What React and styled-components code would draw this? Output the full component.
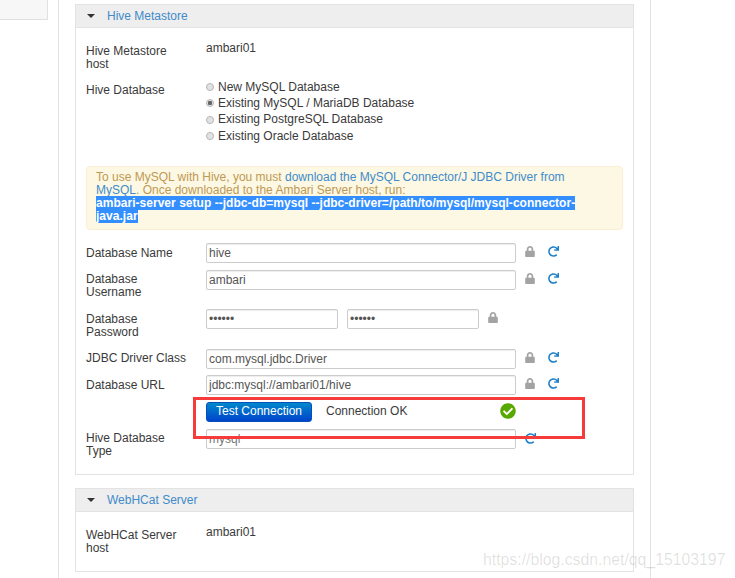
import React from 'react'
import styled, { createGlobalStyle } from 'styled-components'
import { FaCheckCircle, FaLock, FaRedo } from 'react-icons/fa'

const Global = createGlobalStyle`
    html, body {
        margin: 0;
        padding: 0;
        background: #fff;
    }
    body {
        font-family: "Liberation Sans", Arial, sans-serif;
        font-size: 12px;
        line-height: 13px;
        color: #3a3a3a;
    }
`

const Page = styled.div`
    position: relative;
    display: flex;
    align-items: flex-start;
    width: 735px;
    height: 578px;
    overflow: hidden;
`

const SideStub = styled.div`
    box-sizing: border-box;
    width: 48px;
    height: 20px;
    margin-right: 10px;
    background: #f7f7f7;
    border-right: 1px solid #e0e0e0;
    border-bottom: 1px solid #e0e0e0;
`

const Main = styled.div`
    box-sizing: border-box;
    width: 593px;
    height: 578px;
    padding: 4px 16px 0;
    border-left: 1px solid #e3e3e3;
    border-right: 1px solid #e3e3e3;
`

const Panel = styled.section`
    margin-bottom: 13px;
    border: 1px solid #e3e3e3;
    border-top: 0;
`

const PanelHead = styled.div`
    display: flex;
    align-items: center;
    height: 24px;
    box-sizing: border-box;
    margin: 0 -1px;
    padding-left: 11px;
    background: #eee;
    border: 1px solid #e3e3e3;
    color: #428bca;
`

const Caret = styled.i`
    width: 0;
    height: 0;
    margin-right: 12px;
    border-top: 4px solid #333;
    border-left: 4px solid transparent;
    border-right: 4px solid transparent;
`

const PanelBody = styled.div`
    padding: 14px 10px 16px;
`

const Row = styled.div`
    display: grid;
    grid-template-columns: 120px 1fr;
    margin-bottom: ${(p) => p.$gap || 0}px;
`

const Label = styled.label`
    display: block;
    width: 100px;
    padding-top: ${(p) => p.$top || 3}px;
`

const Value = styled.div`
    min-height: 13px;
`

const RadioList = styled.div`
    display: flex;
    flex-direction: column;
`

const RadioRow = styled.div`
    display: flex;
    align-items: center;
    height: 16.33px;
`

const RadioDot = styled.span`
    box-sizing: border-box;
    width: 8px;
    height: 8px;
    margin-right: 4px;
    border-radius: 50%;
    border: 1px solid #b5b5b5;
    background: ${(p) => (p.$on ? 'radial-gradient(circle, #666 0 2px, #e6e6e6 2.5px)' : '#e2e2e2')};
`

const Alert = styled.div`
    margin-bottom: 13px;
    padding: 4px 20px 6px 9px;
    background: #fcf8e3;
    border: 1px solid #fbeed5;
    border-radius: 4px;
    color: #c09853;
`

const AlertLink = styled.a`
    color: #428bca;
`

const Selected = styled.span`
    background: #338fff;
    color: #fff;
    font-weight: bold;
    letter-spacing: 0.03px;
`

const Controls = styled.div`
    display: flex;
    align-items: flex-start;
`

const Input = styled.input`
    box-sizing: border-box;
    flex: none;
    width: ${(p) => p.$w || 310}px;
    height: 20px;
    margin: 0 ${(p) => p.$after || 0}px 0 0;
    padding: 0 2px;
    border: 1px solid #ccc;
    border-radius: 2px;
    box-shadow: inset 0 1px 1px rgba(0, 0, 0, 0.075);
    font: 12px "Liberation Sans", Arial, sans-serif;
    color: ${(p) => (p.disabled ? '#777' : '#555')};
    background: #fff;
    outline: 0;
`

const LockIcon = styled(FaLock)`
    flex: none;
    width: 10px;
    height: 11px;
    margin: 3px 13px 0 9px;
    color: #a3a3a3;
`

const RefreshIcon = styled(FaRedo)`
    flex: none;
    width: 11px;
    height: 11px;
    margin-top: ${(p) => p.$top || 3}px;
    margin-left: ${(p) => p.$left || 0}px;
    color: #1e7fc9;
`

const TestButton = styled.button`
    box-sizing: border-box;
    width: 106px;
    height: 20px;
    padding: 0 0 2px;
    border: 1px solid #0650b8;
    border-radius: 3px;
    background: linear-gradient(#0088cc, #0044cc);
    color: #fff;
    font: 12px "Liberation Sans", Arial, sans-serif;
`

const ConnectionText = styled.span`
    width: 174px;
    margin-left: 14px;
    line-height: 18px;
`

const OkIcon = styled(FaCheckCircle)`
    width: 16px;
    height: 16px;
    margin-top: 1px;
    color: #59a800;
`

const Highlight = styled.div`
    position: absolute;
    left: 193px;
    top: 397px;
    width: 392px;
    height: 42px;
    box-sizing: border-box;
    border: 3px solid #f73b3b;
`

const Watermark = styled.div`
    position: absolute;
    left: 483px;
    top: 551px;
    font-size: 15.8px;
    line-height: 18px;
    color: rgba(0, 0, 0, 0.13);
`

const App = () => {
    return <Page>
        <Global />
        <SideStub />
        <Main>
            <Panel>
                <PanelHead><Caret />Hive Metastore</PanelHead>
                <PanelBody>
                    <Row $gap={8}>
                        <Label>Hive Metastore host</Label>
                        <Value>ambari01</Value>
                    </Row>
                    <Row $gap={22}>
                        <Label $top={5}>Hive Database</Label>
                        <RadioList>
                            <RadioRow><RadioDot />New MySQL Database</RadioRow>
                            <RadioRow><RadioDot $on />Existing MySQL / MariaDB Database</RadioRow>
                            <RadioRow><RadioDot />Existing PostgreSQL Database</RadioRow>
                            <RadioRow><RadioDot />Existing Oracle Database</RadioRow>
                        </RadioList>
                    </Row>
                    <Alert>
                        To use MySQL with Hive, you must <AlertLink>download the MySQL Connector/J JDBC Driver from MySQL</AlertLink>. Once downloaded to the Ambari Server host, run:<br />
                        <Selected>ambari-server setup --jdbc-db=mysql --jdbc-driver=/path/to/mysql/mysql-connector-java.jar</Selected>
                    </Alert>
                    <Row $gap={7}>
                        <Label $top={4}>Database Name</Label>
                        <Controls><Input readOnly value="hive" /><LockIcon /><RefreshIcon /></Controls>
                    </Row>
                    <Row $gap={10}>
                        <Label>Database Username</Label>
                        <Controls><Input readOnly value="ambari" /><LockIcon /><RefreshIcon /></Controls>
                    </Row>
                    <Row $gap={10}>
                        <Label $top={4}>Database Password</Label>
                        <Controls>
                            <Input readOnly type="password" value="ambari" $w={132} $after={9} />
                            <Input readOnly type="password" value="ambari" $w={132} />
                            <LockIcon />
                        </Controls>
                    </Row>
                    <Row $gap={6}>
                        <Label>JDBC Driver Class</Label>
                        <Controls><Input readOnly value="com.mysql.jdbc.Driver" /><LockIcon /><RefreshIcon /></Controls>
                    </Row>
                    <Row $gap={7}>
                        <Label $top={4}>Database URL</Label>
                        <Controls><Input readOnly value="jdbc:mysql://ambari01/hive" /><LockIcon /><RefreshIcon /></Controls>
                    </Row>
                    <Row $gap={7}>
                        <span />
                        <Controls>
                            <TestButton>Test Connection</TestButton>
                            <ConnectionText>Connection OK</ConnectionText>
                            <OkIcon />
                        </Controls>
                    </Row>
                    <Row>
                        <Label>Hive Database Type</Label>
                        <Controls><Input disabled value="mysql" /><RefreshIcon $left={9} $top={4} /></Controls>
                    </Row>
                </PanelBody>
            </Panel>
            <Panel>
                <PanelHead><Caret />WebHCat Server</PanelHead>
                <PanelBody>
                    <Row>
                        <Label>WebHCat Server host</Label>
                        <Value>ambari01</Value>
                    </Row>
                </PanelBody>
            </Panel>
        </Main>
        <Highlight />
        <Watermark>https://blog.csdn.net/qq_15103197</Watermark>
    </Page>
}

export default App
